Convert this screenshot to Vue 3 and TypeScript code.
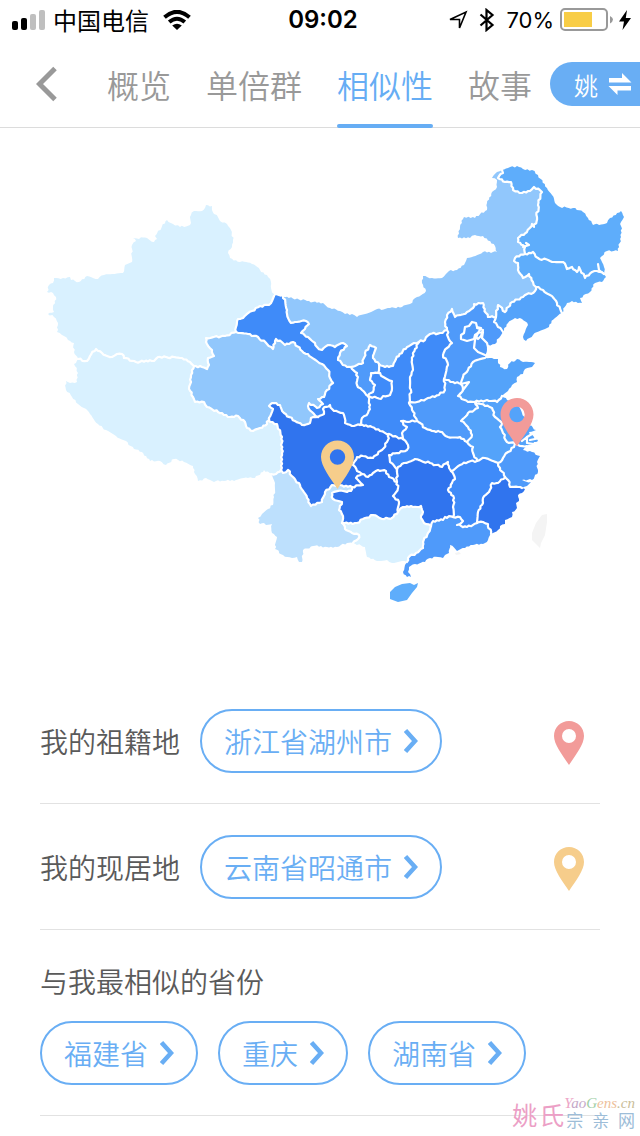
<script setup lang="ts">
import { ref } from 'vue'

type Point = [number, number]

interface Province {
  name: string
  color: string
  arcs: string[]
}

const tabs = ['概览', '单倍群', '相似性', '故事']
const activeTab = ref('相似性')

const places = [
  { label: '我的祖籍地', place: '浙江省湖州市', tone: 'rose' },
  { label: '我的现居地', place: '云南省昭通市', tone: 'amber' },
]
const similar = ['福建省', '重庆', '湖南省']

const pinPath =
  'M15 0C6.7 0 0 6.6 0 15c0 8.400 8 18.500 15 29 7-10.500 15-20.600 15-29C30 6.600 23.300 0 15 0zM15 8a7 7 0 1 1 0 14 7 7 0 0 1 0-14z'

/* Outer edges, each running clockwise around the country or the province. */
const coasts: Record<string, string> = {
  xj: '78,359 74,352 74,343 68,340 62,335 57,332 58,323 54,317 48,314 54,312 53,307 56,297 53,293 47,292 49,285 53,283 54,278 63,278 70,277 71,280 79,282 87,276 98,279 104,275 123,273 125,265 132,262 132,245 136,241 133,238 147,238 154,242 157,239 155,236 167,220 173,224 180,227 190,225 191,215 194,211 202,211 206,205 212,206 212,210 220,221 227,224 231,230 233,240 232,247 228,253 230,258 240,262 252,264 260,270 268,277 271,282 271,288 274,294 274,296',
  gs: '274,296 283,296',
  im: '283,296 307,301 323,303 330,308 340,311 345,314 352,314 357,317 375,310 390,308 402,307 410,304 417,297 426,291 422,283 423,276 432,278 442,278 449,271 457,270 465,263 467,258 483,252 497,252 495,246 483,236 475,235 470,238 458,238 460,227 464,217 475,218 487,210 487,203 492,192 497,187 497,180 492,178 497,172 502,170',
  hl: '502,170 508,168 517,166 523,169 532,170 538,175 547,188 552,195 555,203 560,207 573,208 583,212 588,218 593,225 607,223 610,218 621,211 624,217 621,222 621,237 618,251 607,251 600,258 604,267 604,274',
  jl: '604,274 606,277 602,282 595,283 590,292 580,298 582,303 572,301 567,303 562,313',
  ln: '562,313 555,318 547,328 533,335 526,341 523,337 525,332 528,325 522,319 515,318 508,323 503,332',
  he: '503,332 499,338 495,344 488,345 487,350 485,358',
  sd: '485,358 492,358 498,359 500,367 507,369 510,363 517,359 523,362 535,363 532,367 525,369 523,374 517,377 517,382 512,385 508,391 504,394 502,396',
  js: '502,396 507,400 513,403 518,406 522,413 526,418 528,424 536,430 529,432 538,441 527,446',
  zj: '527,446 523,450 532,452 540,456 537,462 538,472 532,480 522,480 531,482 527,486 522,488',
  fj: '522,488 525,489 522,493 518,495 519,501 516,503 517,508 512,512 512,517 505,520 505,524 500,526 498,530 491,534',
  gd: '491,534 488,540 483,544 473,545 465,548 457,551 450,545 449,553 445,555 443,558 438,557 430,558 425,562 415,564 409,567 408,572 411,577 407,577 403,572 405,565 407,562',
  gx: '407,562 402,561 392,563 387,560 377,561 367,557 365,547 353,543',
  yn: '353,543 347,543 337,547 327,547 313,546 303,550 302,562 299,562 297,557 292,558 283,555 275,549 277,537 272,533 272,524 260,524 258,518 262,514 268,509 273,505 274,497 275,483 271,474',
  xz: '271,474 264,470 255,478 248,478 236,480 224,481 212,481 206,478 198,481 195,474 193,466 184,462 174,459 166,465 160,461 150,461 142,452 134,449 126,441 116,436 106,430 98,424 90,414 84,408 78,404 72,397 66,390 66,381 70,383 77,382 78,373 74,364 78,359',
}

/* Shared edges, drawn once as white lines and reused by both neighbours. */
const borders: Record<string, string> = {
  xjGs: '274,296 272,301 269,305 260,306 252,311 243,318 238,319 236,327 236,332',
  xjQh: '236,332 225,336 206,338 207,344 212,350 214,356 208,358 209,365 207,369 202,367 194,366',
  xjXz: '194,366 190,362 182,358 158,357 154,361 136,362 124,358 122,354 117,354 112,357 102,353 96,349 90,356 87,361 78,359',
  xzQh: '194,366 191,375 191,382 189,389 193,397 195,402 204,402 207,407 218,412 230,417 238,416 245,422 247,428 253,431 260,428 267,424 269,418',
  xzSc: '269,418 270,422 277,424 282,437 282,453 281,470',
  xzYn: '281,470 276,474 271,474',
  qhSc: '269,418 273,409 269,406 272,403 280,405 284,413 295,421 302,425 310,423 311,418 318,417',
  qhGs: '236,332 248,334 258,337 267,344 273,349 276,339 285,345 293,342 302,351 308,354 322,364 328,370 330,378 333,383 327,390 324,397 318,399 323,404 317,408 309,403 308,406 312,412 318,417',
  gsSc: '318,417 324,414 323,409 330,405 334,411 343,413 345,423 352,426 360,425',
  gsIm: '283,296 287,310 287,314 291,323 297,322 306,321 309,324 305,329 301,333 308,337 315,343 317,347 322,350 328,345 335,347 343,343 347,346 340,353 338,360 347,367 351,367',
  nxIm: '351,367 357,365 363,363 365,353 370,345 376,348 373,358 379,364',
  nxSn: '379,364 378,373',
  nxGe: '378,373 371,373 370,380 375,385 373,392 368,396',
  nxGs: '351,367 357,373 357,385 362,390 368,396',
  geSn: '378,373 392,381 392,388 390,395 383,396 381,399 368,396',
  gsSn: '368,396 370,405 368,413 362,418 360,425',
  snIm: '379,364 383,366 393,366 396,359 407,347 414,343 419,342',
  snSx: '419,342 415,349 412,360 413,370 410,377 411,390 409,403',
  sxIm: '419,342 425,340 430,334 440,333 447,330',
  sxHe: '447,330 448,337 452,343 447,348 443,355 448,365 444,379',
  sxHa: '444,379 445,390 439,395 428,398 417,402 409,403',
  snHa: '409,403 412,410 417,421',
  snHb: '417,421 408,422 401,421 407,427 402,433 403,439',
  snSc: '360,425 372,427 380,431 389,434',
  snCq: '389,434 397,437 403,439',
  cqHb: '403,439 408,445 407,450 397,453 389,455 390,462 395,467 397,472',
  cqSc: '389,434 387,442 382,450 373,458 368,458 363,456 357,457 353,465 357,471 362,474',
  cqGz: '362,474 368,477 373,473 378,470 386,471 389,477 397,482',
  cqHn: '397,472 397,482',
  scGz: '362,474 356,478 363,485 352,487',
  scYn: '281,470 283,473 288,470 293,477 300,485 307,498 311,506 322,502 325,492 332,485 340,485 352,487',
  ynGz: '352,487 351,491 343,491 332,493 333,499 342,502 339,510 343,516 342,523',
  gzGx: '342,523 357,523 365,518 373,515 382,519 392,518 398,512',
  gzHn: '397,482 398,488 393,496 399,502 398,512',
  ynGx: '342,523 345,529 352,533 359,535 358,539 353,543',
  gxHn: '398,512 403,507 413,507 421,506 423,512 421,518 424,523 431,526',
  gxGd: '431,526 428,533 423,542 423,548 416,553 408,558 407,562',
  hnGd: '431,526 433,521 443,520 445,517 453,517',
  hnJx: '453,517 453,507 454,498 448,490 452,483 455,479 451,471',
  hnHb: '397,472 398,467 404,463 415,459 430,463 442,467 448,462 449,468 451,471',
  hbHa: '417,421 425,428 432,431 442,432 448,437 460,437 467,442',
  hbAh: '467,442 473,447 473,453 477,461',
  hbJx: '477,461 468,462 460,465 451,471',
  jxAh: '477,461 485,458 498,463',
  ahZj: '498,463 503,458 508,452 514,447 515,443',
  ahJs: '515,443 507,442 503,433 500,427 502,423 495,417 492,408 485,406 475,402',
  haAh: '475,402 478,408 468,413 461,421 468,427 472,435 467,442',
  haHe: '444,379 453,382 461,384',
  haSd: '461,384 463,389 458,396 468,402 475,402',
  sdHe: '461,384 463,377 468,370 473,362 485,358',
  sdJs: '502,396 497,402 487,400 475,402',
  jsZj: '515,443 520,446 527,446',
  zjJx: '498,463 500,468 505,477',
  zjFj: '505,477 508,480 510,487 518,487 522,488',
  jxFj: '505,477 498,483 492,483 489,492 483,498 483,503 478,512 477,523',
  jxGd: '453,517 460,517 463,521 457,525 467,527 477,523',
  fjGd: '477,523 483,522 488,524 491,534',
  heIm: '447,330 445,322 447,315 452,309 455,317 467,312 473,308 474,304 483,303 486,313 488,317 496,317',
  heLn: '496,317 494,322 498,327 503,332',
  lnIm: '496,317 498,305 505,312 512,302 523,297 535,291 536,287',
  lnJl: '536,287 543,290 550,295 557,303 562,313',
  jlHl: '525,254 533,252 538,258 550,261 563,262 567,269 572,267 577,272 579,267 585,278 592,272 597,271 604,274',
  jlIm: '525,254 515,258 514,261 518,263 518,270 523,278 529,274 533,282 536,287',
  hlIm: '502,170 503,173 498,178 505,182 511,182 513,190 522,193 530,191 534,187 542,192 538,205 537,217 534,227 532,224 527,232 518,238 518,242 525,247 525,254',
}

/* Municipal boundaries that sit inside a province fill. */
const innerLines: string[] = [
  '472,322 469,326 465,327 464,333 461,335 461,339 467,341 474,339 475,335 478,333 481,328 477,327 476,323 472,322',
  '478,333 483,332 482,338 487,343 488,347',
  '478,333 475,340 474,348 478,352 485,355',
  '477,328 483,330 481,336 478,339 475,336',
  '604,274 599,270 598,264',
  '523,247 529,245 526,243',
  '527,437 532,434 539,436',
  '522,441 527,437 527,443 534,444',
  '461,384 469,382 463,390',
  '540,438 530,440',
]

/* A leading "-" walks the edge backwards. */
const provinces: Province[] = [
  { name: '新疆', color: '#d9f1ff', arcs: ['xj', 'xjGs', 'xjQh', 'xjXz'] },
  { name: '西藏', color: '#d9f1ff', arcs: ['-xjXz', 'xzQh', 'xzSc', 'xzYn', 'xz'] },
  { name: '青海', color: '#91c7fc', arcs: ['-xjQh', 'qhGs', '-qhSc', '-xzQh'] },
  { name: '甘肃', color: '#3f8bf9', arcs: ['gs', 'gsIm', 'nxGs', 'gsSn', '-gsSc', '-qhGs', '-xjGs'] },
  { name: '庆阳', color: '#3f8bf9', arcs: ['geSn', '-nxGe'] },
  { name: '宁夏', color: '#4f9afa', arcs: ['nxIm', 'nxSn', 'nxGe', '-nxGs'] },
  { name: '内蒙古', color: '#91c7fc', arcs: ['im', 'hlIm', 'jlIm', '-lnIm', '-heIm', '-sxIm', '-snIm', '-nxIm', '-gsIm'] },
  { name: '黑龙江', color: '#5eadfb', arcs: ['hl', '-jlHl', '-hlIm'] },
  { name: '吉林', color: '#5eadfb', arcs: ['jlHl', 'jl', '-lnJl', '-jlIm'] },
  { name: '辽宁', color: '#54a3fa', arcs: ['lnIm', 'lnJl', 'ln', '-heLn'] },
  { name: '河北', color: '#4f9afa', arcs: ['heIm', 'heLn', 'he', '-sdHe', '-haHe', '-sxHe'] },
  { name: '山西', color: '#3f8bf9', arcs: ['sxIm', 'sxHe', 'sxHa', '-snSx'] },
  { name: '陕西', color: '#3f8bf9', arcs: ['snIm', 'snSx', 'snHa', 'snHb', '-snCq', '-snSc', '-gsSn', '-geSn', '-nxSn'] },
  { name: '河南', color: '#4f9afa', arcs: ['haHe', 'haSd', 'haAh', '-hbHa', '-snHa', '-sxHa'] },
  { name: '山东', color: '#54a3fa', arcs: ['sdHe', 'sd', 'sdJs', '-haSd'] },
  { name: '江苏', color: '#54a3fa', arcs: ['js', '-jsZj', 'ahJs', '-sdJs'] },
  { name: '安徽', color: '#54a3fa', arcs: ['-ahJs', '-ahZj', '-jxAh', '-hbAh', '-haAh'] },
  { name: '浙江', color: '#4f9afa', arcs: ['jsZj', 'zj', '-zjFj', '-zjJx', 'ahZj'] },
  { name: '湖北', color: '#3f8bf9', arcs: ['hbHa', 'hbAh', 'hbJx', '-hnHb', '-cqHb', '-snHb'] },
  { name: '重庆', color: '#3074ee', arcs: ['snCq', 'cqHb', 'cqHn', '-cqGz', '-cqSc'] },
  { name: '四川', color: '#3074ee', arcs: ['qhSc', 'gsSc', 'snSc', 'cqSc', 'scGz', '-scYn', '-xzSc'] },
  { name: '贵州', color: '#3074ee', arcs: ['cqGz', 'gzHn', '-gzGx', '-ynGz', '-scGz'] },
  { name: '云南', color: '#bde0fd', arcs: ['scYn', 'ynGz', 'ynGx', 'yn', '-xzYn'] },
  { name: '广西', color: '#d9f1ff', arcs: ['gzGx', 'gxHn', 'gxGd', 'gx', '-ynGx'] },
  { name: '湖南', color: '#3074ee', arcs: ['hnHb', '-hnJx', '-hnGd', '-gxHn', '-gzHn', '-cqHn'] },
  { name: '江西', color: '#3f8bf9', arcs: ['jxAh', 'zjJx', 'jxFj', '-jxGd', 'hnJx', '-hbJx'] },
  { name: '福建', color: '#3074ee', arcs: ['zjFj', 'fj', '-fjGd', '-jxFj'] },
  { name: '广东', color: '#4f9afa', arcs: ['hnGd', 'jxGd', 'fjGd', 'gd', '-gxGd'] },
]

const islands = [
  { name: '海南', color: '#5eadfb', points: '418,583 414,585 410,583 402,584 395,587 390,592 390,599 398,602 407,600 412,593 417,587' },
  { name: '台湾', color: '#f4f4f4', points: '547,514 542,515 536,523 532,533 532,540 537,545 540,548 541,543 545,535 547,522' },
  { name: '香港', color: '#f4f4f4', points: '455,553 459,552 461,554 456,555' },
]

const parse = (text: string): Point[] =>
  text.split(' ').map((pair) => pair.split(',').map(Number) as Point)

/* Adds small alternating kinks so that long edges read as natural boundaries. */
function roughen(points: Point[]): Point[] {
  const out: Point[] = [points[0]]
  for (let i = 1; i < points.length; i++) {
    const [ax, ay] = points[i - 1]
    const [bx, by] = points[i]
    const dx = bx - ax
    const dy = by - ay
    const length = Math.hypot(dx, dy)
    const steps = Math.floor(length / 2)
    for (let s = 1; s < steps; s++) {
      const seed = Math.sin(ax * 12.9 + by * 78.2 + s * 37.7) * 43758.5
      const shift = (seed - Math.floor(seed) - 0.5) * 2
      out.push([
        ax + (dx * s) / steps - (dy / length) * shift,
        ay + (dy * s) / steps + (dx / length) * shift,
      ])
    }
    out.push([bx, by])
  }
  return out
}

const edges: Record<string, Point[]> = {}
for (const [key, text] of Object.entries({ ...coasts, ...borders })) {
  edges[key] = roughen(parse(text))
}

const toText = (points: Point[]) =>
  points.map(([x, y]) => `${x.toFixed(1)},${y.toFixed(1)}`).join(' ')

const shapes = provinces.map(({ name, color, arcs }) => ({
  name,
  color,
  points: toText(
    arcs.flatMap((arc) => (arc.startsWith('-') ? [...edges[arc.slice(1)]].reverse() : edges[arc])),
  ),
}))
const lines = [...Object.keys(borders).map((key) => toText(edges[key])), ...innerLines]
</script>

<template>
  <div class="screen">
    <header class="status">
      <svg class="signal" viewBox="0 0 34 20" aria-hidden="true">
        <rect x="0" y="11" width="6" height="9" rx="2" />
        <rect x="9" y="8" width="6" height="12" rx="2" />
        <rect class="weak" x="18" y="4" width="6" height="16" rx="2" />
        <rect class="weak" x="27" y="0" width="6" height="20" rx="2" />
      </svg>
      <span class="carrier">中国电信</span>
      <svg class="wifi" viewBox="0 0 28 20" aria-hidden="true">
        <path class="arc" d="M1.500 7.200Q14 -3.600 26.500 7.200" />
        <path class="arc" d="M6.200 12Q14 5.400 21.800 12" />
        <path d="M9.200 15.500Q14 12 18.800 15.500L14 20z" />
      </svg>
      <time class="clock">09:02</time>
      <div class="indicators">
        <svg class="locate" viewBox="0 0 20 20" aria-hidden="true">
          <path d="M2 9.500L18 2L11.500 18V9.500z" />
        </svg>
        <svg class="bluetooth" viewBox="0 0 16 24" aria-hidden="true">
          <path d="M1.500 6.500L13.500 17L7.500 22V2L13.500 7L1.500 17.500" />
        </svg>
        <span class="percent">70%</span>
        <svg class="battery" viewBox="0 0 54 24" aria-hidden="true">
          <rect class="case" x="1" y="1" width="46" height="21" rx="4" />
          <rect class="charge" x="4" y="4" width="28" height="15" />
          <path class="tip" d="M50 8Q53 9.500 53 11.500T50 15.500z" />
        </svg>
        <svg class="bolt" viewBox="0 0 12 20" aria-hidden="true">
          <path d="M8 0L0 11.500H5L3.500 20L12 8H6.800z" />
        </svg>
      </div>
    </header>

    <nav class="nav">
      <button class="back" type="button" aria-label="返回">
        <svg viewBox="0 0 22 36" aria-hidden="true"><path d="M19 2.500L3.500 18L19 33.500" /></svg>
      </button>
      <div class="tabs">
        <button
          v-for="tab in tabs"
          :key="tab"
          type="button"
          class="tab"
          :class="{ active: tab === activeTab }"
          @click="activeTab = tab"
        >
          {{ tab }}
        </button>
      </div>
      <button class="switch" type="button">
        <span>姚</span>
        <svg viewBox="0 0 24 22" aria-hidden="true">
          <path d="M1 5H14V0L23.500 9.500H1zM23 13H0.500L9.500 22V17.500H23z" />
        </svg>
      </button>
    </nav>

    <main>
      <svg class="map" viewBox="0 128 640 550" role="img" aria-label="中国地图">
        <polygon v-for="s in shapes" :key="s.name" :points="s.points" :fill="s.color" />
        <polygon v-for="s in islands" :key="s.name" :points="s.points" :fill="s.color" />
        <polyline v-for="(line, i) in lines" :key="i" class="border" :points="line" />
        <g transform="translate(500.500 398) scale(1.1)">
          <path class="rose" fill-rule="evenodd" :d="pinPath" />
        </g>
        <g transform="translate(321 440.500) scale(1.1)">
          <path class="amber" fill-rule="evenodd" :d="pinPath" />
        </g>
      </svg>

      <div class="list">
        <section v-for="item in places" :key="item.label" class="row">
          <span class="label">{{ item.label }}</span>
          <button class="pill" type="button">
            {{ item.place }}
            <svg viewBox="0 0 14 24" aria-hidden="true"><path d="M1.500 1.500L11 12L1.500 22.500" /></svg>
          </button>
          <svg class="pin" viewBox="0 0 30 44" aria-hidden="true">
            <path :class="item.tone" fill-rule="evenodd" :d="pinPath" />
          </svg>
        </section>
        <section class="row stacked">
          <h2 class="label">与我最相似的省份</h2>
          <div class="pills">
            <button v-for="name in similar" :key="name" class="pill" type="button">
              {{ name }}
              <svg viewBox="0 0 14 24" aria-hidden="true"><path d="M1.500 1.500L11 12L1.500 22.500" /></svg>
            </button>
          </div>
        </section>
      </div>
    </main>

    <div class="watermark">
      <span class="family"><b>姚</b><b>氏</b></span>
      <span class="site">
        <span class="domain"><i class="pink">Y</i><i class="violet">ao</i><i class="green">G</i><i class="orange">ens</i><i class="tan">.cn</i></span>
        <span class="clan"><span>宗</span><span>亲</span><span>网</span></span>
      </span>
    </div>
  </div>
</template>

<style>
body {
  margin: 0;
  background: #fff;
}
</style>

<style scoped>
.screen {
  position: relative;
  min-height: 100vh;
  box-sizing: border-box;
  overflow: hidden;
  background: #fff;
  font-family: 'Noto Sans CJK SC', sans-serif;
  font-weight: 350;
}

button {
  margin: 0;
  padding: 0;
  border: 0;
  background: none;
  font: inherit;
  cursor: pointer;
}

svg {
  display: block;
  flex: none;
}

.status {
  display: grid;
  grid-template-columns: auto auto auto 1fr auto;
  align-items: center;
  height: 40px;
  padding: 0 9px 0 12px;
  color: #000;
}

.signal {
  width: 34px;
  height: 20px;
  margin-right: 7px;
}

.signal .weak {
  fill: #bfbfbf;
}

.carrier {
  font-size: 24px;
  line-height: 40px;
  font-weight: 400;
}

.wifi {
  width: 28px;
  height: 20px;
  margin-left: 14px;
}

.wifi .arc {
  fill: none;
  stroke: #000;
  stroke-width: 4;
}

.clock {
  position: absolute;
  left: 0;
  right: 0;
  text-align: center;
  padding-left: 6px;
  font-family: Inter, sans-serif;
  font-size: 24px;
  font-weight: 600;
  line-height: 40px;
}

.indicators {
  grid-column: 5;
  display: flex;
  align-items: center;
}

.locate {
  width: 20px;
  height: 20px;
}

.locate path {
  fill: none;
  stroke: #000;
  stroke-width: 1.6;
}

.bluetooth {
  width: 16px;
  height: 24px;
  margin-left: 11px;
}

.bluetooth path {
  fill: none;
  stroke: #000;
  stroke-width: 2.2;
}

.percent {
  margin: 0 6px 0 11px;
  font-family: Inter, sans-serif;
  font-size: 22px;
  font-weight: 400;
  line-height: 40px;
}

.battery {
  width: 54px;
  height: 24px;
}

.battery .case {
  fill: none;
  stroke: #999;
  stroke-width: 2;
}

.battery .charge {
  fill: #f8cd46;
}

.battery .tip {
  fill: #999;
}

.bolt {
  width: 12px;
  height: 20px;
  margin-left: 5px;
}

.nav {
  display: flex;
  align-items: stretch;
  height: 87px;
  border-bottom: 1px solid #dcdcdc;
}

.back {
  flex: none;
  width: 107px;
  padding-left: 36px;
}

.back svg {
  width: 22px;
  height: 36px;
}

.back path {
  fill: none;
  stroke: #999;
  stroke-width: 5;
}

.tabs {
  flex: 1;
  display: flex;
  gap: 35px;
  min-width: 0;
}

.tab {
  position: relative;
  flex: none;
  height: 88px;
  color: #999;
  font-size: 32px;
  line-height: 88px;
}

.tab.active {
  color: #66adf4;
}

.tab.active::after {
  content: '';
  position: absolute;
  left: 0;
  right: 0;
  bottom: 0;
  height: 4px;
  border-radius: 2px;
  background: #66adf4;
}

.switch {
  flex: none;
  display: flex;
  align-items: center;
  align-self: flex-start;
  gap: 10px;
  height: 44px;
  margin-top: 22px;
  padding: 0 8px 0 24px;
  border-radius: 22px 0 0 22px;
  background: #69aef4;
  color: #fff;
  font-size: 24px;
}

.switch svg {
  width: 24px;
  height: 22px;
  fill: #fff;
}

.map {
  width: 100%;
  height: auto;
}

.map .border {
  fill: none;
  stroke: #fff;
  stroke-width: 2.2;
  stroke-linejoin: round;
  stroke-linecap: round;
}

.rose {
  fill: #f29b99;
}

.amber {
  fill: #f6cd8b;
}

.list {
  padding: 0 40px;
}

.row {
  display: flex;
  align-items: center;
  gap: 20px;
  padding: 31px 0 30px;
  border-bottom: 1px solid #e2e2e2;
}

.row.stacked {
  flex-direction: column;
  align-items: flex-start;
}

.label {
  margin: 0;
  color: #5a5a5a;
  font-size: 28px;
  font-weight: 350;
  line-height: 40px;
}

.pills {
  display: flex;
  gap: 20px;
}

.pill {
  display: flex;
  align-items: center;
  gap: 12px;
  height: 64px;
  box-sizing: border-box;
  padding: 0 22px;
  border: 2px solid #69aef4;
  border-radius: 32px;
  color: #69aef4;
  font-size: 28px;
  line-height: 40px;
}

.pill svg {
  width: 14px;
  height: 24px;
}

.pill path {
  fill: none;
  stroke: #69aef4;
  stroke-width: 4.5;
}

.pin {
  width: 30px;
  height: 44px;
  margin: 4px 16px 0 auto;
}

.watermark {
  position: absolute;
  right: 5px;
  bottom: 4px;
  display: flex;
  align-items: center;
  font-weight: 400;
}

.family {
  display: flex;
  gap: 2px;
  color: #ec9fc6;
  font-size: 25px;
  line-height: 36px;
}

.family b {
  font-weight: 400;
}

.site {
  display: flex;
  flex-direction: column;
}

.domain {
  font-family: 'Liberation Serif', serif;
  font-size: 15px;
  line-height: 17px;
}

.clan {
  display: flex;
  justify-content: space-between;
  padding-left: 2px;
  color: #9dbdd8;
  font-family: 'Liberation Serif', 'Noto Sans CJK SC', serif;
  font-size: 17px;
  line-height: 20px;
}

.pink {
  color: #eda5c6;
}

.violet {
  color: #c4a8c8;
}

.green {
  color: #9fcfa8;
}

.orange {
  color: #eebf9c;
}

.tan {
  color: #c9bd98;
}
</style>
